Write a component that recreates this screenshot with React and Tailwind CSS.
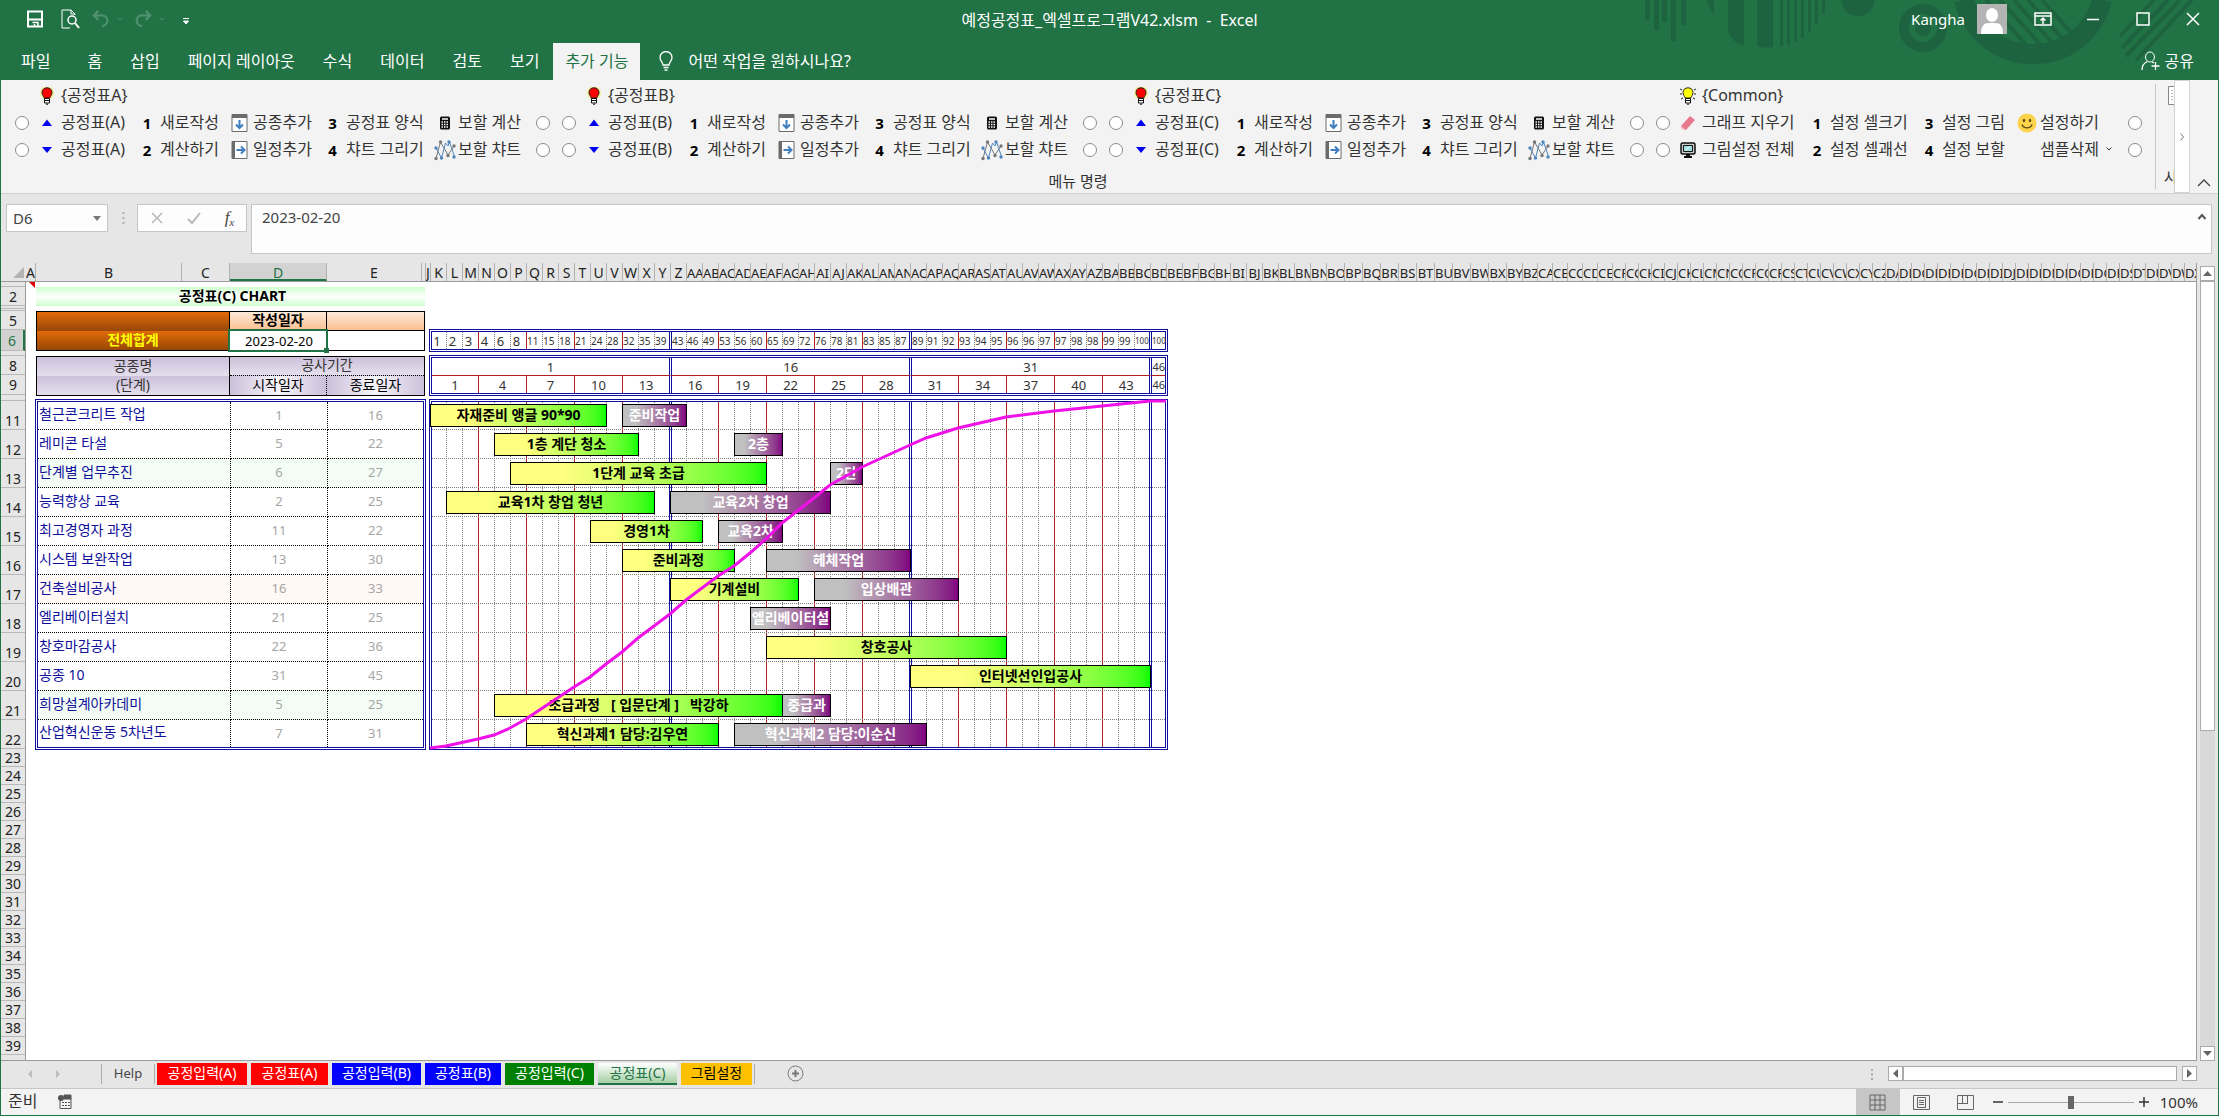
import {useState} from "react";
import clsx from "clsx";

const BLUE_BOX = "border-3 border-double border-[#0f0f9c]";

const menuTabs = ["파일", "홈", "삽입", "페이지 레이아웃", "수식", "데이터", "검토", "보기", "추가 기능"];

const tasks = [
    {name: "철근콘크리트 작업", start: 1, end: 16, bars: [[0, 11, "자재준비 앵글 90*90"], [12, 16, "준비작업", true]]},
    {name: "레미콘 타설", start: 5, end: 22, bars: [[4, 13, "1층 계단 청소"], [19, 22, "2층", true]]},
    {name: "단계별 업무추진", start: 6, end: 27, tone: "green", bars: [[5, 21, "1단계 교육 초급"], [25, 27, "2단", true]]},
    {name: "능력향상 교육", start: 2, end: 25, bars: [[1, 14, "교육1차 창업 청년"], [15, 25, "교육2차 창업", true]]},
    {name: "최고경영자 과정", start: 11, end: 22, bars: [[10, 17, "경영1차"], [18, 22, "교육2차", true]]},
    {name: "시스템 보완작업", start: 13, end: 30, bars: [[12, 19, "준비과정"], [21, 30, "헤체작업", true]]},
    {name: "건축설비공사", start: 16, end: 33, tone: "red", bars: [[15, 23, "기계설비"], [24, 33, "입상배관", true]]},
    {name: "엘리베이터설치", start: 21, end: 25, bars: [[20, 25, "엘리베이터설", true]]},
    {name: "창호마감공사", start: 22, end: 36, bars: [[21, 36, "창호공사"]]},
    {name: "공종 10", start: 31, end: 45, bars: [[30, 45, "인터넷선인입공사"]]},
    {name: "희망설계아카데미", start: 5, end: 25, tone: "green", bars: [[4, 22, "초급과정   [ 입문단계 ]   박강하"], [22, 25, "중급과", true]]},
    {name: "산업혁신운동 5차년도", start: 7, end: 31, bars: [[6, 18, "혁신과제1 담당:김우연"], [19, 31, "혁신과제2 담당:이순신", true]]},
];

const progress = [
    1, 2, 3, 4, 6, 8, 11, 15, 18, 21, 24, 28, 32, 35, 39,
    43, 46, 49, 53, 56, 60, 65, 69, 72, 76, 78, 81, 83, 85, 87,
    89, 91, 92, 93, 94, 95, 96, 96, 97, 97, 98, 98, 99, 99, 100, 100,
];

// [day, height from the top of the chart]
const curve = [
    [0, 349], [1, 347], [3, 340], [4, 336], [5, 329], [6, 320], [9, 288], [10, 278], [11, 265], [12, 253], [13, 239],
    [15, 215], [16, 201], [18, 177], [19, 167], [20, 154], [21, 140], [22, 124], [24, 99], [25, 86], [27, 68],
    [30, 46], [31, 39], [33, 29], [36, 18], [39, 12], [42, 7], [45, 2], [46, 2],
];

// row number -> height
const rows = [
    [1, 5], [2, 19], [3, 3], [4, 2], [5, 19], [6, 21], [7, 5], [8, 19], [9, 20], [10, 6],
    ...tasks.map((_, i) => [11 + i, 29]),
    ...Array.from({length: 18}, (_, i) => [23 + i, 18]),
];

const columnName = (n) => (n > 26 ? String.fromCharCode(64 + Math.floor((n - 1) / 26)) : "") + String.fromCharCode(65 + ((n - 1) % 26));

const columnWidth = (n) => {
    if (n < 67) return "w-4";
    if (n < 77) return "w-[18px]";
    if (n === 77) return "w-4";
    if (n < 84) return "w-[15px]";
    return "w-[13px]";
};

// day columns: every third line is red, every fifteenth is a double blue one
const dayWidth = (i) => {
    if (i === 45) return "w-[13px]";
    if (i % 15 === 0) return "w-[15px]";
    if (i % 15 === 14) return "w-[17px]";
    return "w-4";
};

const dayLine = (i) => {
    if (i === 45) return "";
    if (i % 15 === 14) return "border-r-3 border-r-[#0f0f9c] [border-right-style:double]";
    if (i % 3 === 2) return "border-r border-r-[#b32020]";
    return "border-r border-r-[#808080] [border-right-style:dotted]";
};

const progressText = (p, i) => {
    if (p === 100) return "text-left text-[8px]";
    if (i < 6) return "pr-1 text-center text-[13px]";
    return "text-left text-[10px]";
};

const Svg = ({size = 18, className, children, box = 18}) => (
    <svg width={size} height={size} viewBox={`0 0 ${box} ${box}`} fill="none" stroke="currentColor" className={clsx("shrink-0", className)} aria-hidden="true">
        {children}
    </svg>
);

const Chevron = ({className}) => (
    <Svg size={8} box={8} className={className}><path d="M1.500 2.500 4 5l2.500-2.500"/></Svg>
);

const Bulb = ({color}) => (
    <Svg size={18} box={18}>
        {color === "#ffff00"
            ? <path d="M1 2l2 1M1 7h2M15 7h2M15 3l2-1M2 12l2-1M14 11l2 1" stroke="#222"/>
            : <circle cx="9" cy="6" r="7" fill="#f7ef9a" stroke="none"/>}
        <path d="M9 .8c3 0 5 2 5 4.700 0 2.500-1.600 3.300-2.200 5.500H6.200C5.600 8.800 4 8 4 5.500 4 2.800 6 .8 9 .8z" fill={color} stroke="#222"/>
        <path d="M6.500 11.500h5v4.500h-5z" fill="#fff" stroke="#111"/>
        <path d="M6.500 13.500h5M8 17.200h2" stroke="#111"/>
    </Svg>
);

const InsertIcon = ({side}) => (
    <Svg size={20} box={20}>
        <path d="M2 1.500h15v17H2z" fill="#fff" stroke="#6b6b6b"/>
        {side
            ? <path d="M2 2h3v16H2z" fill="#6b6b6b" stroke="none"/>
            : <path d="M2 2h15v3H2z" fill="#6b6b6b" stroke="none"/>}
        {side
            ? <path d="M6.500 10h8M11 6.500l3.500 3.500-3.500 3.500" stroke="#3f7fbf" strokeWidth="2"/>
            : <path d="M9.500 7v8M6 11.500 9.500 15l3.500-3.500" stroke="#3f7fbf" strokeWidth="2"/>}
    </Svg>
);

const CalcIcon = () => (
    <Svg size={14} box={14}>
        <rect x="2" y=".500" width="10" height="13" rx="1.500" fill="#111" stroke="none"/>
        <path d="M4 3h6" stroke="#fff" strokeWidth="1.500"/>
        <path d="M3.500 6h7M3.500 8.500h7M3.500 11h7" stroke="#fff" strokeWidth="1.500" strokeDasharray="1.500 1"/>
    </Svg>
);

const LinesIcon = () => (
    <Svg size={22} box={22}>
        <path d="M2 19.500 6.500 3 14 16l6-9" stroke="#777"/>
        <path d="M2 9l5.500 10L11.500 4l2.500 3 1.500-4 5 14.500" stroke="#4f86bd"/>
        <g fill="#4f86bd" stroke="none">
            <circle cx="2" cy="9" r="1.700"/><circle cx="7.500" cy="19" r="1.700"/><circle cx="15" cy="3" r="1.700"/><circle cx="20" cy="18" r="1.700"/>
        </g>
        <g fill="#777" stroke="none">
            <circle cx="2" cy="19.500" r="1.700"/><circle cx="6.500" cy="3" r="1.700"/><circle cx="14" cy="16.500" r="1.700"/><circle cx="20" cy="7" r="1.700"/>
        </g>
    </Svg>
);

const EraserIcon = () => (
    <Svg size={18} box={18}>
        <path d="M2 12 11 2l5 4-9 10-4-1z" fill="#e8798c" stroke="none"/>
        <path d="m2 12 5 4-4-.5z" fill="#f7c3cc" stroke="none"/>
    </Svg>
);

const MonitorIcon = () => (
    <Svg size={18} box={18}>
        <rect x="2" y="2" width="14" height="11" rx="1.500" fill="#c9c9c9" stroke="#111" strokeWidth="1.500"/>
        <path d="M4.500 4.500h9v6h-9z" fill="#9fe0e0" stroke="#111"/>
        <path d="M6.500 9 11 5.500" stroke="#fff"/>
        <path d="M5 16h8M7 14h4" stroke="#111" strokeWidth="2"/>
    </Svg>
);

const SmileIcon = () => (
    <Svg size={20} box={20}>
        <circle cx="10" cy="10" r="9.500" fill="#fdd44b" stroke="none"/>
        <ellipse cx="7" cy="7.500" rx="1.200" ry="1.800" fill="#5c4714" stroke="none"/>
        <ellipse cx="13" cy="7.500" rx="1.200" ry="1.800" fill="#5c4714" stroke="none"/>
        <path d="M5 11.500c1.500 4.500 8.500 4.500 10 0" stroke="#5c4714" strokeWidth="1.300"/>
    </Svg>
);

const Up = () => <Svg size={12} box={12}><path d="M6 2.500 11 9H1z" fill="#0000f0" stroke="none"/></Svg>;
const Down = () => <Svg size={12} box={12}><path d="M6 9 11 3H1z" fill="#0000f0" stroke="none"/></Svg>;

const Round = ({name}) => (
    <input type="radio" name={name} aria-label={name} className="size-[14px] appearance-none justify-self-center rounded-full border border-[#8a8a8a] bg-white"/>
);

const Cmd = ({icon, label, caret}) => (
    <>
        <span className="flex items-center justify-center text-[15px] font-bold text-black">{icon}</span>
        <button type="button" className="flex items-center gap-1.5 pb-0.5 text-left whitespace-nowrap">
            {label}{caret && <Chevron/>}
        </button>
    </>
);

const RibbonBlock = ({id}) => (
    <section className="mr-1.5 grid shrink-0 grid-cols-[20px_29px_73px_26px_66px_27px_66px_27px_86px_26px_75px_20px] grid-rows-[26px_27px_27px] items-center">
        <span className="col-start-2 flex justify-center"><Bulb color="#ff0000"/></span>
        <h2 className="col-span-10 pb-0.5">{`{공정표${id}}`}</h2>
        <Round name={`${id}-1`}/>
        <Cmd icon={<Up/>} label={`공정표(${id})`}/>
        <Cmd icon="1" label="새로작성"/>
        <Cmd icon={<InsertIcon/>} label="공종추가"/>
        <Cmd icon="3" label="공정표 양식"/>
        <Cmd icon={<CalcIcon/>} label="보할 계산"/>
        <Round name={`${id}-2`}/>
        <Round name={`${id}-3`}/>
        <Cmd icon={<Down/>} label={`공정표(${id})`}/>
        <Cmd icon="2" label="계산하기"/>
        <Cmd icon={<InsertIcon side/>} label="일정추가"/>
        <Cmd icon="4" label="챠트 그리기"/>
        <Cmd icon={<LinesIcon/>} label="보할 챠트"/>
        <Round name={`${id}-4`}/>
    </section>
);

const TitleBar = () => (
    <header className="relative h-20 shrink-0 bg-[#217346] text-white">
        <svg className="absolute top-0 right-0" width="574" height="80" fill="#1e6340" aria-hidden="true">
            <path d="M1 0h5v20H1zM10 0h5v30h-5zM18 0h5v22h-5zM27 0h5v41h-5zM37 0h5v25h-5z"/>
            <path d="M62 0h8v15zM84 0h16v46q-12-4-16-14zM113 0h16v47q-12 2-16-2z"/>
            <path d="M136 0h3v46h-3zM143 0h3v45h-3zM150 0h3v42h-3zM157 0h3v38h-3zM164 0h3v32h-3zM171 0h3v24h-3zM178 0h3v14h-3z"/>
            <path d="M197 0h34q-3 16-17 16T197 0z"/>
            <circle cx="279" cy="28" r="19" fill="none" stroke="#1e6340" strokeWidth="10"/>
            <circle cx="279" cy="28" r="8"/>
            <path d="M320 0a71 71 0 0 0 138 0" fill="none" stroke="#1e6340" strokeWidth="20"/>
            <path d="m342 0 50 56M356 0l48 53M370 0l44 49M384 0l38 43M398 0l30 34" fill="none" stroke="#1e6340" strokeWidth="4"/>
            <path d="m476 36 34-36M478 48l46-48M482 56l54-56M492 60l56-60" fill="none" stroke="#1e6340" strokeWidth="4"/>
        </svg>
        <div className="relative grid h-[38px] grid-cols-[1fr_auto_1fr] items-center text-[15px]">
            <div className="flex items-center pl-[25px]">
                <button type="button" aria-label="저장" className="mr-4">
                    <Svg><path d="M2 1.500h14v15H2zM2 9.500h14" strokeWidth="2"/><path d="M6.500 12.500h5.500v4M8.500 14v3" strokeWidth="1.500"/></Svg>
                </button>
                <button type="button" aria-label="인쇄 미리 보기" className="mr-3">
                    <Svg size={20} box={20}><path d="M15 6V5l-4-4H2v18h8M11 1v4h4"/><circle cx="12" cy="11" r="4" strokeWidth="1.500"/><path d="m15 14 4 5" strokeWidth="2"/></Svg>
                </button>
                <button type="button" aria-label="실행 취소" className="flex items-center gap-1.5 text-[#4f9070]">
                    <Svg size={18} box={20}><path d="M7 1 2 6l5 5M2 6h9c8 0 8 11 0 12" strokeWidth="2.500"/></Svg><Chevron/>
                </button>
                <button type="button" aria-label="다시 실행" className="ml-2.5 flex items-center gap-1.5 text-[#4f9070]">
                    <Svg size={18} box={20}><path d="m13 1 5 5-5 5M18 6H9c-8 0-8 11 0 12" strokeWidth="2.500"/></Svg><Chevron/>
                </button>
                <button type="button" aria-label="빠른 실행 도구 모음" className="mt-1 ml-4">
                    <Svg size={8} box={8}><path d="M1 1.500h6M1.500 4h5L4 7z" fill="currentColor"/></Svg>
                </button>
            </div>
            <h1 className="pt-0.5 text-[16px] whitespace-pre">예정공정표_엑셀프로그램V42.xlsm  -  Excel</h1>
            <div className="flex items-center justify-end pr-4">
                <span>Kangha</span>
                <svg width="30" height="30" className="mr-[27px] ml-3" aria-hidden="true">
                    <path d="M0 0h30v30H0z" fill="#b4b4b4"/>
                    <ellipse cx="15" cy="11" rx="6" ry="7" fill="#fff"/>
                    <path d="M4 30c0-8 3-11 8-11h6c5 0 8 3 8 11z" fill="#fff"/>
                </svg>
                <button type="button" aria-label="리본 메뉴 표시 옵션"><Svg><path d="M1 3h16v12H1zM1 6h16M9 14V8M6.500 10.500 9 8l2.500 2.500" strokeWidth="1.500"/></Svg></button>
                <button type="button" aria-label="최소화" className="ml-8"><Svg><path d="M3 9.500h12" strokeWidth="1.500"/></Svg></button>
                <button type="button" aria-label="최대화" className="ml-8"><Svg><path d="M3 3h12v12H3z" strokeWidth="1.500"/></Svg></button>
                <button type="button" aria-label="닫기" className="ml-8"><Svg><path d="m3 3 12 12M15 3 3 15" strokeWidth="1.500"/></Svg></button>
            </div>
        </div>
        <nav className="relative flex h-[42px] items-end pl-1.5 text-[16px]">
            {menuTabs.map((tab, i) => (
                <button
                    key={tab}
                    type="button"
                    className={clsx(
                        "h-[37px] pb-0.5 whitespace-nowrap",
                        i === 0 ? "mr-[9px] px-3.5" : i === 8 ? "bg-[#f3f3f3] px-3 text-[#217346]" : "px-3.5"
                    )}
                >
                    {tab}
                </button>
            ))}
            <label className="ml-4 flex h-[37px] items-center gap-3 pb-0.5">
                <Svg size={20} box={20}><path d="M7 14c0-3-3-4-3-7.500a6 6 0 0 1 12 0C16 10 13 11 13 14zM7.500 16.500h5M8.500 19h3" strokeWidth="1.300"/></Svg>
                <input type="text" placeholder="어떤 작업을 원하시나요?" className="w-48 placeholder:text-white focus:outline-none"/>
            </label>
            <button type="button" className="mr-6 ml-auto flex h-[37px] items-center gap-1 pb-0.5">
                <Svg size={20} box={20}><ellipse cx="9" cy="6" rx="4.500" ry="5"/><path d="M1 19c0-5 2-7 5.500-8.500M11 11l2 1M14.500 11v8M10.500 15h8" strokeWidth="1.300"/></Svg>
                공유
            </button>
        </nav>
    </header>
);

const Ribbon = () => (
    <div className="flex h-[114px] shrink-0 border-b border-[#d2d2d2] bg-[#f3f3f3] text-[16px] leading-6 text-[#333]">
        <div className="flex min-w-0 flex-1 flex-col overflow-hidden">
            <div className="flex pt-[3px] pl-[11px]">
                <RibbonBlock id="A"/>
                <RibbonBlock id="B"/>
                <RibbonBlock id="C"/>
                <section className="grid shrink-0 grid-cols-[20px_29px_102px_26px_86px_26px_72px_26px_85px_20px] grid-rows-[26px_27px_27px] items-center">
                    <span className="col-start-2 flex justify-center"><Bulb color="#ffff00"/></span>
                    <h2 className="col-span-8 pb-0.5">{"{Common}"}</h2>
                    <Round name="common-1"/>
                    <Cmd icon={<EraserIcon/>} label="그래프 지우기"/>
                    <Cmd icon="1" label="설정 셀크기"/>
                    <Cmd icon="3" label="설정 그림"/>
                    <Cmd icon={<SmileIcon/>} label="설정하기"/>
                    <Round name="common-2"/>
                    <Round name="common-3"/>
                    <Cmd icon={<MonitorIcon/>} label="그림설정 전체"/>
                    <Cmd icon="2" label="설정 셀괘선"/>
                    <Cmd icon="4" label="설정 보할"/>
                    <Cmd icon="" label="샘플삭제" caret/>
                    <Round name="common-4"/>
                </section>
            </div>
            <p className="mt-1.5 text-center text-[15px]">메뉴 명령</p>
        </div>
        <div className="my-1 flex w-[19px] shrink-0 flex-col justify-between overflow-hidden border-l border-[#c6c6c6] pl-2">
            <Svg size={20} box={20} className="mt-0.5 ml-1"><path d="M.500.500h19v18H.5z" fill="#fff" stroke="#888"/><path d="M4 4v12M7 4v12" stroke="#777" strokeDasharray="1 2"/></Svg>
            <span className="w-[11px] overflow-hidden text-[15px]">사</span>
        </div>
        <button type="button" aria-label="더 보기" className="flex w-4 shrink-0 items-center justify-center border border-[#d2d2d2] bg-white">
            <Svg size={10} box={10}><path d="m3.500 1.500 3 3.500-3 3.500" stroke="#777"/></Svg>
        </button>
        <button type="button" aria-label="리본 메뉴 축소" className="flex w-7 shrink-0 items-end justify-center pb-0.5">
            <Svg size={14} box={14}><path d="m1 9 6-6 6 6" stroke="#444" strokeWidth="1.300"/></Svg>
        </button>
    </div>
);

const FormulaBar = () => (
    <div className="flex h-[69px] shrink-0 items-start pt-2.5 pr-1.5 pl-[5px] text-[15px] text-[#444]">
        <div className="flex h-7 w-[102px] items-center border border-[#c6c6c6] bg-[#fdfdfd] pr-1.5 pl-1.5">
            <input type="text" aria-label="이름 상자" defaultValue="D6" className="w-full min-w-0 focus:outline-none"/>
            <Svg size={8} box={8}><path d="M0 2h8L4 7z" fill="#777" stroke="none"/></Svg>
        </div>
        <Svg size={28} box={28} className="text-[#b0b0b0]"><path d="M15.500 8v13" strokeWidth="2" strokeDasharray="2 3"/></Svg>
        <div className="ml-px flex h-7 w-[110px] items-center justify-around border border-[#c6c6c6] bg-[#fdfdfd] text-[#b8b8b8]">
            <button type="button" aria-label="취소"><Svg size={14} box={14}><path d="m2 2 10 10M12 2 2 12" strokeWidth="1.500"/></Svg></button>
            <button type="button" aria-label="입력"><Svg size={14} box={14}><path d="m1 8 4 4 8-10" strokeWidth="2"/></Svg></button>
            <button type="button" aria-label="함수 삽입" className="font-['Liberation_Serif',serif] text-[17px] text-[#444] italic">f<sub className="text-[11px]">x</sub></button>
        </div>
        <div className="ml-1 flex h-[50px] flex-1 items-start border border-[#c6c6c6] bg-[#fdfdfd] pt-px pr-1 pl-2.5">
            <input type="text" aria-label="수식 입력줄" defaultValue="2023-02-20" className="flex-1 focus:outline-none"/>
            <Svg size={10} box={10} className="mt-1.5"><path d="m1.500 7 3.500-4 3.500 4" stroke="#555" strokeWidth="2"/></Svg>
        </div>
    </div>
);

const ColumnHeads = () => (
    <div className="flex h-[19px] shrink-0 overflow-hidden border-b border-[#9c9c9c] text-[14px] leading-5 text-[#222]">
        <div className="flex w-[25px] shrink-0 items-center justify-end pr-0.5">
            <Svg size={11} box={11}><path d="M11 0v11H0z" fill="#b4b4b4" stroke="none"/></Svg>
        </div>
        {[["A", "w-2.5"], ["B", "w-[146px]"], ["C", "w-12"], ["D", "w-[97px]"], ["E", "w-[95px]"], ["", "w-1"], ["J", "w-[5px]"]].map(([name, w]) => (
            <div
                key={name || "hidden"}
                className={clsx("shrink-0 overflow-hidden border-r border-[#b1b1b1] text-center", w, name === "D" && "border-b-2 border-b-[#217346] bg-[#d2d2d2] text-[#217346]")}
            >
                {name}
            </div>
        ))}
        {Array.from({length: 118}, (_, i) => i + 11).map((n) => (
            <div key={n} className={clsx("shrink-0 overflow-hidden border-r border-[#b1b1b1] text-center whitespace-nowrap", columnWidth(n), n > 26 && "text-[13px]")}>
                {columnName(n)}
            </div>
        ))}
    </div>
);

const RowHeads = () => (
    <div className="w-[25px] shrink-0 border-r border-[#9c9c9c] bg-[#e6e6e6] text-center text-[14px] leading-[17px] text-[#222]">
        {rows.map(([n, h]) => (
            <div
                key={n}
                style={{height: h}}
                className={clsx(
                    "flex justify-center overflow-hidden border-b border-[#b9b9b9]",
                    h === 29 ? "items-end" : "items-center",
                    n === 6 && "border-r-2 border-r-[#217346] bg-[#d2d2d2] text-[#217346]"
                )}
            >
                {h > 6 && n < 40 && n}
            </div>
        ))}
    </div>
);

const LILAC = "bg-linear-to-b from-[#ccc0da] to-[#e4dfec]";
const LILAC_SIDE = "bg-linear-to-r from-[#ccc0da] via-[#f7f5fa] to-[#ccc0da]";
const ORANGE = "bg-linear-to-b from-[#e26b0a] to-[#974706]";
const PEACH = "bg-linear-to-b from-[#fde9d9] to-[#fac090]";

const TaskTables = () => (
    <div className="w-[391px] shrink-0 pt-[5px] text-[14px] leading-4 text-black">
        <h2 className="mx-px h-[19px] bg-linear-to-b from-[#ccffcc] via-white to-[#ccffcc] pl-1 text-center leading-[18px] font-bold">공정표(C) CHART</h2>
        <table className="mx-px mt-[5px] w-[389px] table-fixed border-separate border-spacing-0 border border-black text-center">
            <colgroup><col/><col className="w-[97px]"/><col className="w-[97px]"/></colgroup>
            <tbody>
                <tr className="h-[19px]">
                    <td className={clsx("border-r border-black p-0", ORANGE)}/>
                    <th className={clsx("border-r border-b border-black p-0 pb-0.5", PEACH)}>작성일자</th>
                    <td className={clsx("border-b border-black p-0", PEACH)}/>
                </tr>
                <tr className="h-[19px]">
                    <th className={clsx("border-r border-black p-0 pb-0.5 text-[#ffff00]", ORANGE)}>전체합계</th>
                    <td className="relative border-r border-black p-0 pl-0.5 text-[13px]">
                        2023-02-20
                        <span className="absolute -inset-x-0.5 -inset-y-0.5 border-2 border-[#217346]"/>
                        <span className="absolute -right-[3px] -bottom-[3px] size-[5px] bg-[#217346]"/>
                    </td>
                    <td className="p-0"/>
                </tr>
            </tbody>
        </table>
        <table className="mx-px mt-[5px] w-[389px] table-fixed border-separate border-spacing-0 border border-black text-center text-[#333]">
            <colgroup><col/><col className="w-[97px]"/><col className="w-[97px]"/></colgroup>
            <tbody>
                <tr className="h-[19px]">
                    <td className={clsx("border-r border-black p-0 pb-0.5", LILAC)}>공종명</td>
                    <td colSpan={2} className={clsx("border-b border-dotted border-black p-0 pb-0.5", LILAC)}>공사기간</td>
                </tr>
                <tr className="h-[19px] text-black">
                    <td className={clsx("border-r border-black p-0 pb-0.5 text-[#333]", LILAC)}>(단계)</td>
                    <td className={clsx("border-r border-dotted border-black p-0 pb-0.5", LILAC_SIDE)}>시작일자</td>
                    <td className={clsx("p-0 pb-0.5", LILAC_SIDE)}>종료일자</td>
                </tr>
            </tbody>
        </table>
        <table className={clsx("mt-[3px] w-full table-fixed border-separate border-spacing-0", BLUE_BOX)}>
            <colgroup><col/><col className="w-[97px]"/><col className="w-[95px]"/></colgroup>
            <tbody>
                {tasks.map((t, i) => {
                    const line = i < 11 && "border-b";
                    return (
                        <tr
                            key={t.name}
                            className={clsx(
                                i === 0 ? "h-7" : i === 11 ? "h-[27px]" : "h-[29px]",
                                t.tone === "green" && "bg-[#f3fdf5]",
                                t.tone === "red" && "bg-[#fff8f4]"
                            )}
                        >
                            <td className={clsx("border-r border-dotted border-black p-0 pb-[3px] pl-px whitespace-nowrap text-[#0f0f9c]", line)}>{t.name}</td>
                            <td className={clsx("border-r border-dotted border-black p-0 pb-0.5 text-center text-[13px] text-[#a6a6a6]", line)}>{t.start}</td>
                            <td className={clsx("border-dotted border-black p-0 pb-0.5 text-center text-[13px] text-[#a6a6a6]", line)}>{t.end}</td>
                        </tr>
                    );
                })}
            </tbody>
        </table>
    </div>
);

const DayCols = () => (
    <colgroup>{progress.map((_, i) => <col key={i} className={dayWidth(i)}/>)}</colgroup>
);

const Gantt = () => (
    <div className="ml-[3px] w-[739px] shrink-0 pt-[47px] text-center text-[#333]">
        <table className={clsx("h-[23px] w-full table-fixed border-separate border-spacing-0 leading-4", BLUE_BOX)}>
            <DayCols/>
            <tbody>
                <tr>
                    {progress.map((p, i) => <td key={i} className={clsx("p-0", dayLine(i), progressText(p, i))}>{p}</td>)}
                </tr>
            </tbody>
        </table>
        <table className={clsx("mt-[3px] w-full table-fixed border-separate border-spacing-0 text-[13px] leading-4", BLUE_BOX)}>
            <DayCols/>
            <tbody>
                <tr className="h-[18px]">
                    {[1, 16, 31].map((d) => <td key={d} colSpan={15} className={clsx("border-b border-b-[#b32020] p-0", dayLine(14))}>{d}</td>)}
                    <td className="border-b border-b-[#b32020] p-0 text-[11px]">46</td>
                </tr>
                <tr className="h-[17px]">
                    {Array.from({length: 15}, (_, i) => (
                        <td key={i} colSpan={3} className={clsx("p-0", dayLine(i * 3 + 2))}>{i * 3 + 1}</td>
                    ))}
                    <td className="p-0 text-[11px]">46</td>
                </tr>
            </tbody>
        </table>
        <div className={clsx("relative mt-[3px]", BLUE_BOX)}>
            <div className="absolute inset-0 flex">
                {progress.map((_, i) => <div key={i} className={clsx("shrink-0", dayWidth(i), dayLine(i))}/>)}
            </div>
            {tasks.map((t, i) => (
                <div
                    key={t.name}
                    className={clsx(
                        "relative",
                        i === 0 ? "h-7 pt-0.5" : i === 11 ? "h-[27px] pt-[3px]" : "h-[29px] pt-[3px]",
                        i < 11 && "border-b border-dotted border-[#808080]"
                    )}
                >
                    {t.bars.map(([from, to, label, late]) => (
                        <div
                            key={label}
                            style={{left: from * 16 - 2, width: (to - from) * 16 + 1}}
                            className={clsx(
                                "absolute h-[23px] overflow-hidden border border-black text-[14px] leading-5 font-bold whitespace-pre",
                                late ? "bg-linear-to-r from-[#c0c0c0] from-20% to-[#800080] text-white" : "bg-linear-to-r from-[#ffff80] from-20% to-[#00ff00] text-black"
                            )}
                        >
                            {label}
                        </div>
                    ))}
                </div>
            ))}
            <svg width="739" height="351" className="absolute -top-[3px] -left-[3px]" fill="none" aria-hidden="true">
                <polyline points={curve.map(([day, y]) => `${day * 16 + 1},${y}`).join(" ")} stroke="#f010e8" strokeWidth="3"/>
            </svg>
        </div>
    </div>
);

const ScrollButton = ({label, d, className}) => (
    <button type="button" aria-label={label} className={clsx("flex size-[15px] shrink-0 items-center justify-center border border-[#ababab] bg-white", className)}>
        <Svg size={9} box={9}><path d={d} fill="#666" stroke="none"/></Svg>
    </button>
);

const Sheet = () => (
    <div className="flex min-h-0 flex-1">
        <main className="flex min-w-0 flex-1 flex-col overflow-hidden border-r border-b border-[#9c9c9c]">
            <ColumnHeads/>
            <div className="flex min-h-0 flex-1 overflow-hidden bg-white">
                <RowHeads/>
                <div className="w-[9px] shrink-0">
                    <Svg size={6} box={6} className="ml-[3px]"><path d="M0 0h6v6z" fill="#e00000" stroke="none"/></Svg>
                </div>
                <TaskTables/>
                <Gantt/>
            </div>
        </main>
        <div className="mt-[3px] mr-[3px] ml-[3px] flex w-[15px] shrink-0 flex-col bg-[#d9d9d9]">
            <ScrollButton label="위로" d="M4.500 2 9 7H0z"/>
            <div className="h-[450px] border border-[#ababab] bg-white"/>
            <ScrollButton label="아래로" d="M4.500 7 9 2H0z" className="mt-auto"/>
        </div>
    </div>
);

const sheetTabs = [
    ["공정입력(A)", "w-[90px] bg-[#ff0000] text-white"],
    ["공정표(A)", "w-[77px] bg-[#ff0000] text-white"],
    ["공정입력(B)", "w-[89px] bg-[#0000ff] text-white"],
    ["공정표(B)", "w-[76px] bg-[#0000ff] text-white"],
    ["공정입력(C)", "w-[89px] bg-[#008000] text-white"],
    ["공정표(C)", "w-[79px] border-b-2 border-[#217346] bg-linear-to-b from-white to-[#a5cfa5] text-[#217346]"],
    ["그림설정", "w-[71px] bg-[#ffc000] text-black"],
];

const SheetTabs = () => (
    <div className="flex h-[27px] shrink-0 items-center pr-[21px] pb-0.5 text-[14px]">
        <Svg size={8} box={8} className="ml-[25px] text-[#bbb]"><path d="M6 0v8L2 4z" fill="currentColor" stroke="none"/></Svg>
        <Svg size={8} box={8} className="ml-5 text-[#bbb]"><path d="M2 0v8l4-4z" fill="currentColor" stroke="none"/></Svg>
        <button type="button" className="ml-[39px] h-5 w-[54px] border-x border-[#ababab] pb-0.5 text-[13px] text-[#444]">Help</button>
        <div className="flex gap-1 pl-0.5">
            {sheetTabs.map(([name, style]) => (
                <button key={name} type="button" className={clsx("h-[22px] pb-0.5 leading-5 whitespace-nowrap", style)}>{name}</button>
            ))}
        </div>
        <span className="ml-0.5 h-5 border-l border-[#ababab]"/>
        <button type="button" aria-label="새 시트" className="ml-8 text-[#777]">
            <Svg size={17} box={17}><circle cx="8.500" cy="8.500" r="7.500"/><path d="M8.500 5v7M5 8.500h7" strokeWidth="2"/></Svg>
        </button>
        <Svg size={14} box={14} className="ml-auto text-[#aaa]"><path d="M7 2v11" strokeWidth="2" strokeDasharray="2 2.500"/></Svg>
        <ScrollButton label="왼쪽으로" d="M2 4.500 7 0v9z" className="ml-[9px]"/>
        <div className="h-[15px] w-[274px] border border-[#ababab] bg-white"/>
        <ScrollButton label="오른쪽으로" d="M7 4.500 2 0v9z" className="ml-[5px]"/>
    </div>
);

const StatusBar = () => {
    const [zoom, setZoom] = useState(50);
    return (
        <footer className="flex h-[27px] shrink-0 items-center border-t border-[#c6c6c6] bg-[#f3f3f3] pr-5 pl-[7px] text-[16px] text-[#333]">
            <span className="pb-0.5">준비</span>
            <Svg size={16} box={16} className="ml-5 text-[#555]">
                <path d="M3 4.500h11v10H3z"/><path d="M7 1h7v4H7z" fill="currentColor"/><circle cx="4" cy="4" r="3" fill="currentColor" stroke="none"/>
                <path d="M5 8.500h8M5 11.500h8" strokeDasharray="2 1"/>
            </Svg>
            <div className="ml-auto flex h-full text-[#666]">
                <button type="button" aria-label="기본" className="flex w-11 items-center justify-center bg-[#c6c6c6]">
                    <Svg size={17} box={17}><path d="M1 1h15v15H1zM6 1v15M11 1v15M1 6h15M1 11h15"/></Svg>
                </button>
                <button type="button" aria-label="페이지 레이아웃" className="flex w-11 items-center justify-center">
                    <Svg size={17} box={17}><path d="M.500 1.500h16v14H.5z"/><path d="M4.500 3.500h8v10h-8zM6 6.500h5M6 8.500h5M6 10.500h5"/></Svg>
                </button>
                <button type="button" aria-label="페이지 나누기 미리 보기" className="flex w-11 items-center justify-center">
                    <Svg size={17} box={17}><path d="M.500 1.500h16v14H.5z"/><path d="M5.500 1.500v8M10.500 1.500v8M1 9.500h10"/></Svg>
                </button>
            </div>
            <button type="button" aria-label="축소" className="ml-1"><Svg size={12} box={12}><path d="M1 6h10" strokeWidth="1.500"/></Svg></button>
            <input
                type="range"
                aria-label="확대/축소"
                value={zoom}
                onChange={(e) => setZoom(e.target.value)}
                className="mx-1 h-[14px] w-[126px] appearance-none bg-[linear-gradient(#aaa,#aaa)] bg-[length:100%_1px] bg-center bg-no-repeat [&::-webkit-slider-thumb]:h-[13px] [&::-webkit-slider-thumb]:w-1.5 [&::-webkit-slider-thumb]:appearance-none [&::-webkit-slider-thumb]:bg-[#666]"
            />
            <button type="button" aria-label="확대"><Svg size={12} box={12}><path d="M1 6h10M6 1v10" strokeWidth="1.500"/></Svg></button>
            <span className="ml-2.5 text-[15px]">100%</span>
        </footer>
    );
};

export default function App() {
    return (
        <div className="flex h-screen flex-col overflow-hidden border-x border-b border-[#217346] bg-[#e6e6e6] font-['Noto_Sans','Noto_Sans_CJK_KR',sans-serif]">
            <TitleBar/>
            <Ribbon/>
            <FormulaBar/>
            <Sheet/>
            <SheetTabs/>
            <StatusBar/>
        </div>
    );
}
